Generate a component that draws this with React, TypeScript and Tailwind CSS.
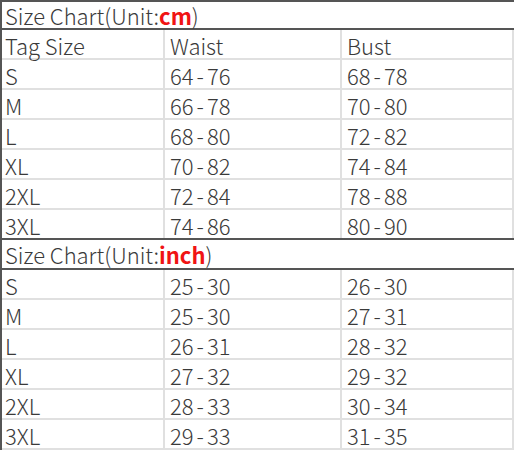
const cmRows = [
  ["S", "64-76", "68-78"],
  ["M", "66-78", "70-80"],
  ["L", "68-80", "72-82"],
  ["XL", "70-82", "74-84"],
  ["2XL", "72-84", "78-88"],
  ["3XL", "74-86", "80-90"],
];

const inchRows = [
  ["S", "25-30", "26-30"],
  ["M", "25-30", "27-31"],
  ["L", "26-31", "28-32"],
  ["XL", "27-32", "29-32"],
  ["2XL", "28-33", "30-34"],
  ["3XL", "29-33", "31-35"],
];

const font = { fontFamily: '"Noto Sans CJK SC", "Noto Sans", sans-serif' };

// ranges like "64-76" get a slightly wider dash, as in the source sheet
function Range({ text }: { text: string }) {
  const parts = text.split("-");
  if (parts.length < 2) return <>{text}</>;
  return (
    <>
      {parts[0]}
      <span className="px-[3px]">-</span>
      {parts[1]}
    </>
  );
}

function Row({ cells, last }: { cells: string[]; last?: boolean }) {
  return (
    <div
      className={`grid grid-cols-[163px_177px_172px] h-[30px] ${
        last ? "border-b-2 border-[#555555]" : "border-b-2 border-[#e0e0e0]"
      }`}
    >
      <div className="pl-[3px] pt-[2px] border-r-2 border-[#e0e0e0] leading-[26px]">{cells[0]}</div>
      <div className="pl-[5px] pt-[2px] border-r-2 border-[#e0e0e0] leading-[26px]">
        <Range text={cells[1]} />
      </div>
      <div className="pl-[5px] pt-[2px] border-r-2 border-[#e0e0e0] leading-[26px]">
        <Range text={cells[2]} />
      </div>
    </div>
  );
}

function Title({ unit, first }: { unit: string; first?: boolean }) {
  return (
    <div
      className={`${
        first ? "h-[28px] leading-[25px]" : "h-[30px] leading-[27px]"
      } pl-[3px] pt-[1px] border-b-2 border-[#555555]`}
    >
      Size Chart(Unit:<span className="text-[#f01414] font-bold">{unit}</span>)
    </div>
  );
}

export default function App() {
  return (
    <div
      className="w-[514px] h-[450px] overflow-hidden bg-white text-[#3a3a3a] text-[22px] font-light border-l-2 border-t-2 border-[#555555]"
      style={font}
    >
      <Title unit="cm" first />
      <Row cells={["Tag Size", "Waist", "Bust"]} />
      {cmRows.map((r, i) => (
        <Row key={r[0]} cells={r} last={i === cmRows.length - 1} />
      ))}
      <Title unit="inch" />
      {inchRows.map((r) => (
        <Row key={"in" + r[0]} cells={r} />
      ))}
    </div>
  );
}
